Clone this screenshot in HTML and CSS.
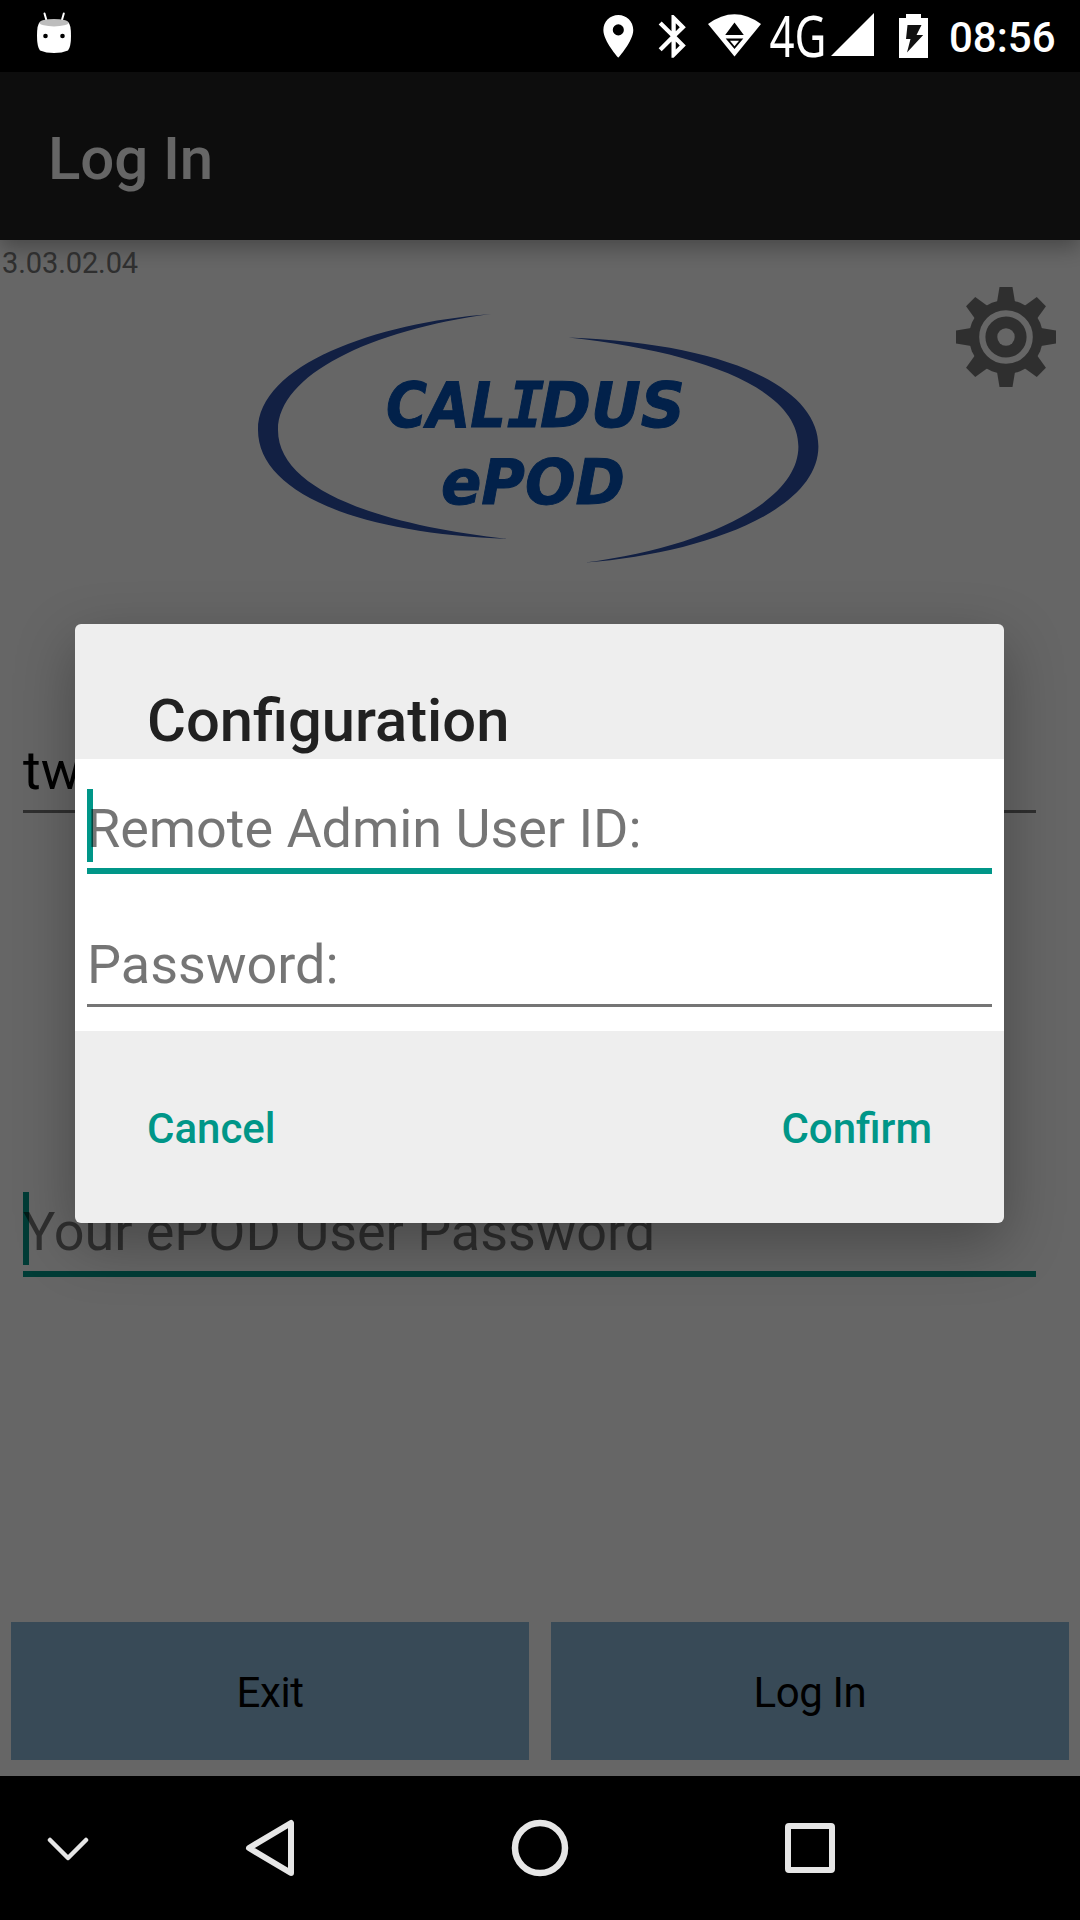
FILE: index.html
```html
<!DOCTYPE html>
<html lang="en">
<head>
    <meta charset="UTF-8">
    <meta name="viewport" content="width=device-width, initial-scale=1.0">
    <title>Log In</title>
    <link rel="stylesheet" href="styles.css">
</head>
<body>
    <div class="status-bar">
        <svg class="icon-android" width="36" height="44" viewBox="36 11 36 44">
            <path d="M44.5 13.5l2.3 8M63.8 13.5l-2.3 8" stroke="#fff" stroke-width="2" stroke-linecap="round"/>
            <path d="M40 22Q54 18 68 22Q71 24 71 36Q71 47 68 50.500Q62 53 54 53Q46 53 40 50.500Q37 47 37 36Q37 24 40 22Z" fill="#fff"/>
            <ellipse cx="54" cy="22.700" rx="14.500" ry="3.700" fill="#bdbdbd"/>
            <circle cx="45.500" cy="36" r="2.300"/>
            <circle cx="62.500" cy="36" r="2.300"/>
        </svg>
        <!-- location, bluetooth, wifi, mobile data, battery -->
        <svg class="status-icons" width="350" height="72" viewBox="590 0 350 72" fill="#fff">
            <path transform="translate(592.7 10.700) scale(2.135)" d="M12 2C8.130 2 5 5.130 5 9c0 5.250 7 13 7 13s7-7.750 7-13c0-3.870-3.130-7-7-7zm0 9.600a2.600 2.600 0 1 1 0-5.200 2.600 2.600 0 0 1 0 5.200z"/>
            <path transform="translate(648 10.700) scale(2.135)" d="M17.710 7.710L12 2h-1v7.590L6.410 5 5 6.410 10.590 12 5 17.590 6.410 19 11 14.410V22h1l5.710-5.710-4.300-4.290 4.300-4.290zM13 5.830l1.880 1.880L13 9.590V5.830zm1.880 10.460L13 18.170v-3.760l1.880 1.880z"/>
            <path d="M708 24Q734.500 4.500 761 24L734.500 56.500Z"/>
            <path d="M734.500 22.500l9.300 12.500h-18.600zM725.700 38.500h17.600l-8.800 10.500z" fill="#000"/>
            <path d="M730 40.800h9l-4.500 5.500z"/>
            <text class="network" x="769.500" y="57" textLength="57" lengthAdjust="spacingAndGlyphs">4G</text>
            <path d="M831 56L874 13V56Z"/>
            <path d="M906 14h15v4h7v40h-29V18h7z"/>
            <path d="M907.500 25h14l-5 10h6.700l-16.200 17.500 3.500-13.500h-4.500z" fill="#111"/>
        </svg>
        <span class="clock">08:56</span>
    </div>

    <div class="app">
        <div class="app-bar">Log In</div>
        <div class="login">
            <div class="version">3.03.02.04</div>
            <div class="brand">
                <svg class="logo" width="562" height="256" viewBox="257 310 562 256">
                    <g fill="#2d50a8">
                        <path id="swoosh" d="M491 314C375 323 258 365 258 430C258 490 350 533 508 539C380 525 278 490 278 430C278 375 370 330 491 314Z"/>
                        <use href="#swoosh" transform="rotate(180 538.200 438.300)"/>
                    </g>
                    <g class="logo-text">
                        <text x="386" y="426.500" textLength="120" lengthAdjust="spacingAndGlyphs">CAL</text>
                        <text class="serif-i" x="507" y="426.500">I</text>
                        <text x="540" y="426.500" textLength="145" lengthAdjust="spacingAndGlyphs">DUS</text>
                        <text x="441" y="503.500" textLength="184" lengthAdjust="spacingAndGlyphs">ePOD</text>
                    </g>
                </svg>
                <svg class="gear" width="100" height="100" viewBox="-50 -50 100 100" fill="#777">
                    <g id="teeth">
                        <path d="M-9.500 -32L-6.500 -50H6.500L9.500 -32V32L6.500 50H-6.500L-9.500 32Z"/>
                        <path d="M-9.500 -32L-6.500 -50H6.500L9.500 -32V32L6.500 50H-6.500L-9.500 32Z" transform="rotate(90)"/>
                    </g>
                    <use href="#teeth" transform="rotate(45)"/>
                    <circle r="37"/>
                    <circle r="23.700" fill="none" stroke="#fff" stroke-width="6.200"/>
                    <circle r="8.700" fill="#fff"/>
                </svg>
            </div>
            <div class="field user-field">
                <input type="text" value="tw">
            </div>
            <div class="field focused">
                <input type="text" placeholder="Your ePOD User Password">
            </div>
            <div class="buttons">
                <button>Exit</button>
                <button>Log In</button>
            </div>
        </div>

        <div class="scrim">
            <div class="dialog">
                <h2>Configuration</h2>
                <div class="dialog-body">
                    <div class="field focused">
                        <input type="text" placeholder="Remote Admin User ID:">
                    </div>
                    <div class="field">
                        <input type="password" placeholder="Password:">
                    </div>
                </div>
                <div class="dialog-actions">
                    <button>Cancel</button>
                    <button>Confirm</button>
                </div>
            </div>
        </div>
    </div>

    <div class="nav-bar">
        <svg width="42" height="28" viewBox="-21 -14 42 28">
            <path d="M-18 -8L0 10L18 -8" stroke-width="4.500"/>
        </svg>
        <svg width="60" height="60" viewBox="-30 -30 60 60">
            <path d="M-21 0L21 -25V25Z" stroke-width="6"/>
        </svg>
        <svg width="60" height="60" viewBox="-30 -30 60 60">
            <circle r="25" stroke-width="6.500"/>
        </svg>
        <svg width="60" height="60" viewBox="-30 -30 60 60">
            <rect x="-22" y="-22" width="44" height="44" rx="1" stroke-width="6"/>
        </svg>
    </div>
</body>
</html>
```
FILE: styles.css
```css
* {
    box-sizing: border-box;
}

body {
    margin: 0;
    width: 1080px;
    height: 1920px;
    display: flex;
    flex-direction: column;
    font-family: Roboto, sans-serif;
    background-color: #000;
    overflow: hidden;
}

svg {
    display: block;
}

input, button {
    font-family: inherit;
    border: none;
    margin: 0;
    padding: 0;
    outline: none;
    background: none;
}

/* Status bar */
.status-bar {
    height: 72px;
    display: flex;
    color: #fff;
}

.icon-android {
    margin: 11px 518px 0 36px;
}

.status-icons {
    overflow: visible;
}

.network {
    font-family: "Noto Sans", sans-serif;
    font-size: 56px;
}

.clock {
    margin-left: 9px;
    font-size: 42px;
    font-weight: 500;
    line-height: 75px;
}

/* Login screen */
.app {
    position: relative;
    height: 1704px;
    display: flex;
    flex-direction: column;
    background-color: #fff;
}

.app-bar {
    position: relative;
    height: 168px;
    padding: 5px 48px 0;
    background-color: #212121;
    color: #fff;
    font-size: 60px;
    font-weight: 500;
    line-height: 163px;
    letter-spacing: -0.1px;
    box-shadow: 0 8px 20px rgba(0, 0, 0, 0.3);
}

.login {
    flex: 1;
    display: flex;
    flex-direction: column;
}

.version {
    position: relative;
    padding-left: 2px;
    font-size: 29px;
    line-height: 47px;
    letter-spacing: -0.1px;
    color: #757575;
}

.brand {
    height: 444px;
    display: flex;
    align-items: flex-start;
}

.logo {
    margin: 23px 137px 0 257px;
}

.logo-text {
    font-family: "DejaVu Sans", sans-serif;
    font-size: 62px;
    font-weight: bold;
    font-style: oblique;
    fill: #0553b8;
    stroke: #0553b8;
    stroke-width: 1px;
}

.serif-i {
    font-family: "DejaVu Sans Mono", monospace;
}

.field {
    position: relative;
    border-bottom: 3px solid #757575;
}

.field input {
    position: relative;
    display: block;
    width: 100%;
    height: 79px;
    font-size: 54px;
    color: #000;
}

.field input::placeholder {
    color: rgba(0, 0, 0, 0.54);
    opacity: 1;
}

.focused {
    border-bottom: 6px solid #009688;
}

.focused input {
    letter-spacing: -0.05px;
}

/* text cursor */
.focused::before {
    content: "";
    position: absolute;
    left: 0;
    top: 0;
    width: 6px;
    height: 73px;
    background-color: #009688;
}

.login .field {
    margin: 0 44px 0 23px;
}

.login .user-field {
    margin-bottom: 379px;
}

.buttons {
    margin-top: auto;
    padding: 0 11px 16px;
    display: flex;
    gap: 22px;
}

.buttons button {
    flex: 1;
    height: 138px;
    padding-top: 3px;
    background-color: #8cb9da;
    font-size: 42px;
    letter-spacing: -0.4px;
    color: #000;
}

/* Configuration dialog */
.scrim {
    position: absolute;
    inset: 0;
    padding: 552px 76px 0 75px;
    background-color: rgba(0, 0, 0, 0.6);
}

.dialog {
    border-radius: 6px;
    background-color: #eee;
    box-shadow: 0 20px 60px rgba(0, 0, 0, 0.3);
}

.dialog h2 {
    margin: 0;
    padding: 60px 72px 0;
    font-size: 59.7px;
    font-weight: 500;
    line-height: 75px;
    color: #212121;
}

.dialog-body {
    display: flex;
    flex-direction: column;
    gap: 51px;
    padding: 30px 12px 24px;
    background-color: #fff;
}

.dialog-actions {
    height: 192px;
    padding: 3px 72px 0;
    display: flex;
    justify-content: space-between;
    align-items: center;
}

.dialog-actions button {
    font-size: 42px;
    font-weight: 500;
    color: #009688;
}

/* Navigation bar */
.nav-bar {
    height: 144px;
    display: grid;
    grid-template-columns: 135px 270px 270px 270px;
    justify-items: center;
    align-items: center;
}

.nav-bar svg {
    fill: none;
    stroke: #e6e6e6;
    stroke-linejoin: round;
    stroke-linecap: round;
}
```
